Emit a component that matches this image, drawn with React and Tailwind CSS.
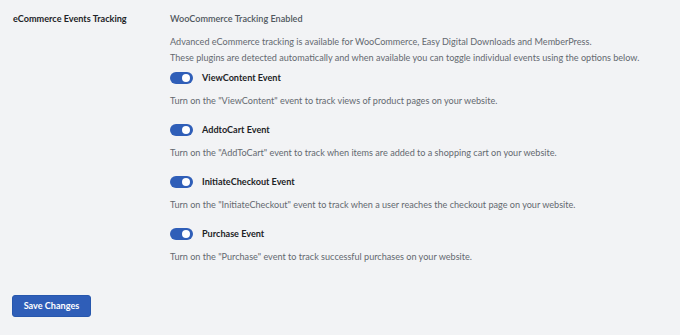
const events = [
  {
    name: "ViewContent Event",
    desc: 'Turn on the "ViewContent" event to track views of product pages on your website.',
  },
  {
    name: "AddtoCart Event",
    desc: 'Turn on the "AddToCart" event to track when items are added to a shopping cart on your website.',
  },
  {
    name: "InitiateCheckout Event",
    desc: 'Turn on the "InitiateCheckout" event to track when a user reaches the checkout page on your website.',
  },
  {
    name: "Purchase Event",
    desc: 'Turn on the "Purchase" event to track successful purchases on your website.',
  },
];

function Toggle() {
  return (
    <span className="relative inline-flex h-[12px] w-[23px] shrink-0 items-center rounded-full bg-[#2f5eb8]">
      <span className="absolute right-[3px] h-[8px] w-[8px] rounded-full bg-white" />
    </span>
  );
}

export default function App() {
  return (
    <div
      className="h-[335px] w-[680px] whitespace-nowrap bg-[#f2f3f5] text-[9.1px] text-[#3c434a]"
      style={{ fontFamily: "Lato, sans-serif" }}
    >
      <div className="flex pl-[13px] pt-[11px]">
        <div className="w-[157px] shrink-0 font-bold leading-[16px] text-[#1d2327]">eCommerce Events Tracking</div>
        <div className="flex flex-col">
          <div className="font-semibold leading-[16px] text-[#50575e]">WooCommerce Tracking Enabled</div>
          <p className="mt-[7px] leading-[16px] text-[#646970]">
            Advanced eCommerce tracking is available for WooCommerce, Easy Digital Downloads and MemberPress.
            <br />
            These plugins are detected automatically and when available you can toggle individual events using the options below.
          </p>
          <div className="flex flex-col">
            {events.map((ev) => (
              <div key={ev.name} className="flex h-[52px] flex-col">
                <div className="flex h-[24px] items-center gap-[9px]">
                  <Toggle />
                  <span className="font-bold text-[#1d2327]">{ev.name}</span>
                </div>
                <p className="leading-[22px] text-[#646970]">{ev.desc}</p>
              </div>
            ))}
          </div>
        </div>
      </div>
      <div className="pl-[12px] pt-[21px]">
        <button className="h-[22px] w-[79px] rounded-[3px] border border-[#2757ad] bg-[#2f5eb8] text-[9.1px] font-bold text-white">
          Save Changes
        </button>
      </div>
    </div>
  );
}
